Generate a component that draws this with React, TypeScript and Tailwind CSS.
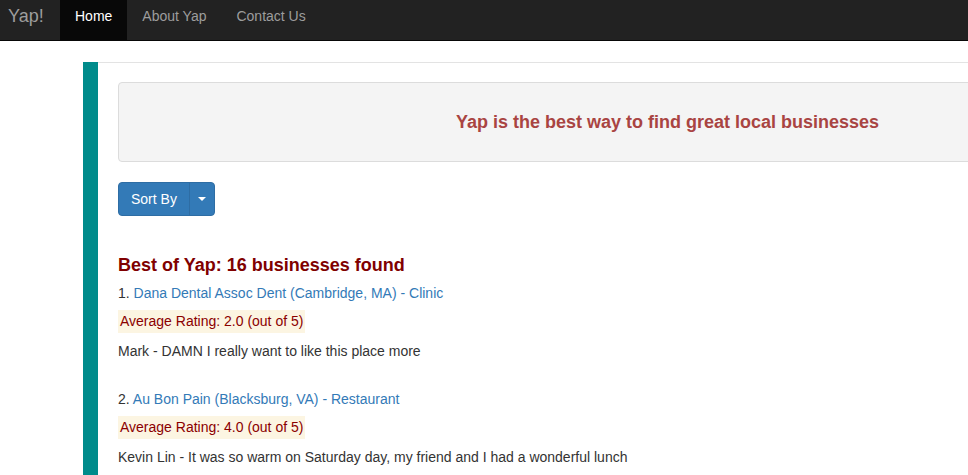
import { ChevronDown } from "lucide-react";

const businesses = [
  {
    id: 1,
    name: "Dana Dental Assoc Dent (Cambridge, MA) - Clinic",
    rating: "2.0",
    review: "Mark - DAMN I really want to like this place more",
  },
  {
    id: 2,
    name: "Au Bon Pain (Blacksburg, VA) - Restaurant",
    rating: "4.0",
    review:
      "Kevin Lin - It was so warm on Saturday day, my friend and I had a wonderful lunch",
  },
];

export default function App() {
  return (
    <div className="w-full h-[475px] overflow-hidden bg-white font-['Liberation_Sans',Arial,sans-serif] text-[14px] text-[#333]">
      {/* navbar */}
      <nav className="h-[41px] bg-[#222] border-b border-[#080808] flex">
        <a className="w-[60px] pl-[8px] pt-[5px] text-[18px] leading-[22px] text-[#9d9d9d]">
          Yap!
        </a>
        <a className="px-[15px] pt-[6px] h-[40px] bg-[#080808] text-white leading-[20px]">
          Home
        </a>
        <a className="px-[15px] pt-[6px] text-[#9d9d9d] leading-[20px]">
          About Yap
        </a>
        <a className="px-[15px] pt-[6px] text-[#9d9d9d] leading-[20px]">
          Contact Us
        </a>
      </nav>

      <div className="ml-[83px] mt-[21px] flex">
        <div className="w-[15px] shrink-0 bg-[#008b8b]" />
        <div className="flex-1 min-w-0 border-t border-[#e3e3e3] pl-[20px] pt-[19px] pb-[40px]">
          <div className="w-[1200px] h-[80px] bg-[#f4f4f4] border border-[#dcdcdc] rounded-[4px] flex items-center pl-[337px]">
            <h2 className="text-[18px] font-bold text-[#a94442] leading-[20px]">
              Yap is the best way to find great local businesses
            </h2>
          </div>

          <div className="mt-[20px] inline-flex h-[34px] rounded-[4px] bg-[#337ab7] border border-[#2e6da4] text-white">
            <button className="px-[12px] leading-[20px]">Sort By</button>
            <button className="w-[25px] border-l border-[#2e6da4] flex items-center justify-center">
              <span className="w-0 h-0 border-l-[4px] border-r-[4px] border-t-[4px] border-l-transparent border-r-transparent border-t-white" />
            </button>
          </div>

          <h3 className="mt-[39px] text-[18px] font-bold leading-[20px] text-[#800000]">
            Best of Yap: {businesses.length * 8} businesses found
          </h3>

          {businesses.map((b, i) => (
            <div key={b.id} className={i === 0 ? "mt-[8px]" : "mt-[28px]"}>
              <p className="leading-[20px]">
                {b.id}. <a className="text-[#337ab7]">{b.name}</a>
              </p>
              <div className="mt-[7px]">
                <span className="inline-block bg-[#fcf5e2] text-[#8b0000] leading-[19px] py-[2px] px-[2px]">
                  Average Rating: {b.rating} (out of 5)
                </span>
              </div>
              <p className="mt-[8px] leading-[20px]">{b.review}</p>
            </div>
          ))}
        </div>
      </div>
    </div>
  );
}
